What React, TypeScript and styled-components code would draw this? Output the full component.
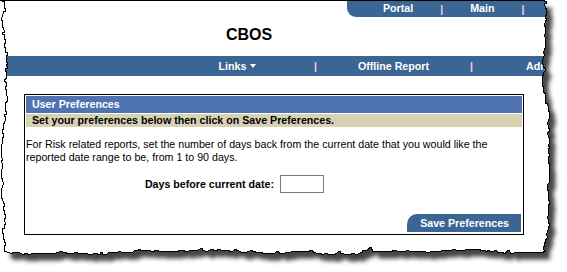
import React, { useMemo } from 'react';
import styled, { createGlobalStyle } from 'styled-components';

const GlobalStyle = createGlobalStyle`
  html, body { margin: 0; padding: 0; background: #ffffff; }
  #root { width: 567px; height: 272px; overflow: hidden; }
  * { box-sizing: border-box; }
`;

const NAV = '#3b6593';
const FONT = `"Liberation Sans", Arial, sans-serif`;

const Frame = styled.div`
  position: relative;
  width: 567px;
  height: 272px;
  overflow: hidden;
  background: #ffffff;
  font-family: ${FONT};
`;

const Overlay = styled.svg`
  position: absolute;
  left: 0;
  top: 0;
  width: 567px;
  height: 272px;
  pointer-events: none;
`;

const Paper = styled.div`
  position: relative;
  width: 567px;
  height: 272px;
  background: #ffffff;
  display: flex;
  flex-direction: column;
`;

const TopRow = styled.div`
  display: flex;
  justify-content: flex-end;
`;

const TopBar = styled.nav`
  width: 220px;
  height: 17px;
  background: ${NAV};
  border-bottom-left-radius: 9px;
  display: flex;
  align-items: center;
  gap: 27px;
  padding-left: 36px;
  white-space: nowrap;
`;

const NavLink = styled.span`
  color: #ffffff;
  font-weight: bold;
  font-size: 10.67px;
  line-height: 17px;
`;

const Sep = styled.span<{ $w?: number }>`
  color: #f0d2e8;
  font-size: 10.67px;
  font-weight: bold;
  width: ${p => (p.$w ? `${p.$w}px` : 'auto')};
  text-align: center;
  flex: none;
`;

const Title = styled.h1`
  margin: 0;
  height: 39px;
  padding: 9px 0 0 226px;
  font-size: 16px;
  line-height: 18px;
  font-weight: bold;
  color: #000000;
`;

const SubBar = styled.nav`
  height: 20px;
  background: ${NAV};
  display: flex;
  align-items: center;
  padding-left: 161px;
  white-space: nowrap;
`;

const SubCell = styled.span`
  width: 153px;
  flex: none;
  text-align: center;
  color: #ffffff;
  font-weight: bold;
  font-size: 10.67px;
  line-height: 20px;
`;

const EdgeCell = styled(SubCell)`
  width: 80px;
  text-align: left;
  padding-left: 53px;
  overflow: hidden;
`;

const Caret = styled.span`
  display: inline-block;
  width: 0;
  height: 0;
  margin-left: 4px;
  vertical-align: 2px;
  border-left: 3.5px solid transparent;
  border-right: 3.5px solid transparent;
  border-top: 4px solid #ffffff;
`;

const Panel = styled.section`
  margin: 18px 0 0 24px;
  width: 500px;
  height: 141px;
  border: 1px solid #000000;
  padding: 1px;
  display: flex;
  flex-direction: column;
  font-size: 10.67px;
  color: #000000;
`;

const PanelHeader = styled.div`
  height: 17px;
  background: #4f73b0;
  color: #ffffff;
  font-weight: bold;
  line-height: 17px;
  padding-left: 6px;
`;

const Instruction = styled.div`
  margin-top: 1px;
  height: 13px;
  background: #d7d2b4;
  font-weight: bold;
  line-height: 13px;
  padding-left: 6px;
  white-space: nowrap;
`;

const Body = styled.p`
  margin: 11px 0 0;
  line-height: 13px;
  padding-left: 0;
`;

const DaysRow = styled.div`
  margin-top: 11px;
  display: grid;
  grid-template-columns: 248px 1fr;
  align-items: center;
`;

const DaysLabel = styled.label`
  text-align: right;
  font-weight: bold;
`;

const DaysInput = styled.input`
  margin-left: 6px;
  width: 44px;
  height: 18px;
  border: 1px solid #7a7a7a;
  padding: 0 2px;
  font-family: ${FONT};
  font-size: 10.67px;
  outline: none;
`;

const SaveButton = styled.button`
  margin-top: auto;
  align-self: flex-end;
  margin-right: 1px;
  margin-bottom: 1px;
  height: 18px;
  padding: 0 12px 0 13px;
  border: none;
  background: ${NAV};
  color: #ffffff;
  font-family: ${FONT};
  font-weight: bold;
  font-size: 10.67px;
  line-height: 18px;
  border-top-left-radius: 10px;
`;

function rng(seed: number) {
  let s = seed;
  return () => {
    s = (s * 1103515245 + 12345) & 0x7fffffff;
    return s / 0x7fffffff;
  };
}

function buildPaperPath(): string {
  const r = rng(17);
  const pts: [number, number][] = [];
  pts.push([0, 0.5]);
  pts.push([543.5, 0.5]);
  let x = 545;
  for (let y = 2; y <= 250; y += 2 + Math.floor(r() * 3)) {
    x += (r() - 0.5) * 3.2;
    if (r() < 0.12) x += (r() - 0.5) * 5;
    x = Math.max(542, Math.min(549, x));
    pts.push([Math.round(x) + 0.5, y]);
    pts.push([Math.round(x) + 0.5, y + 1]);
  }
  for (let xx = 545; xx >= 6; xx -= 2 + Math.floor(r() * 4)) {
    const base = 251.5 + 1.4 * Math.sin(xx / 41) + 0.8 * Math.sin(xx / 13);
    let y = base + (r() - 0.5) * 1.8;
    if (r() < 0.07) y -= 2 + r() * 2;
    pts.push([xx, Math.round(y) + 0.5]);
    pts.push([xx - 1, Math.round(y) + 0.5]);
  }
  let lx = 4;
  for (let y = 251; y >= 2; y -= 2 + Math.floor(r() * 3)) {
    lx += (r() - 0.5) * 3.2;
    if (r() < 0.1) lx += (r() - 0.5) * 4;
    lx = Math.max(1, Math.min(7, lx));
    pts.push([Math.round(lx) + 0.5, y]);
    pts.push([Math.round(lx) + 0.5, y - 1]);
  }
  pts.push([0.5, 0.5]);
  return 'M' + pts.map(p => `${p[0]} ${p[1]}`).join(' L') + ' Z';
}

export default function App() {
  const d = useMemo(buildPaperPath, []);
  return (
    <>
      <GlobalStyle />
      <Frame>
        <Overlay viewBox="0 0 567 272">
          <defs>
            <filter id="tornShadow" x="-5%" y="-5%" width="110%" height="110%">
              <feGaussianBlur stdDeviation="2" />
            </filter>
          </defs>
          <path d={d} fill="#333333" opacity="0.9" transform="translate(6 7)" filter="url(#tornShadow)" />
        </Overlay>
        <Paper style={{ clipPath: `path('${d}')` }}>
          <TopRow>
            <TopBar>
              <NavLink>Portal</NavLink>
              <Sep>|</Sep>
              <NavLink>Main</NavLink>
              <Sep>|</Sep>
            </TopBar>
          </TopRow>
          <Title>CBOS</Title>
          <SubBar>
            <SubCell>
              Links<Caret />
            </SubCell>
            <Sep $w={3}>|</Sep>
            <SubCell>Offline Report</SubCell>
            <Sep $w={3}>|</Sep>
            <EdgeCell>Adm</EdgeCell>
          </SubBar>
          <Panel>
            <PanelHeader>User Preferences</PanelHeader>
            <Instruction>Set your preferences below then click on Save Preferences.</Instruction>
            <Body>
              For Risk related reports, set the number of days back from the current date that you would like the
              reported date range to be, from 1 to 90 days.
            </Body>
            <DaysRow>
              <DaysLabel htmlFor="days">Days before current date:</DaysLabel>
              <DaysInput id="days" type="text" />
            </DaysRow>
            <SaveButton type="button">Save Preferences</SaveButton>
          </Panel>
        </Paper>
        <Overlay viewBox="0 0 567 272">
          <path d={d} fill="none" stroke="#000000" strokeWidth="1" shapeRendering="crispEdges" />
        </Overlay>
      </Frame>
    </>
  );
}
